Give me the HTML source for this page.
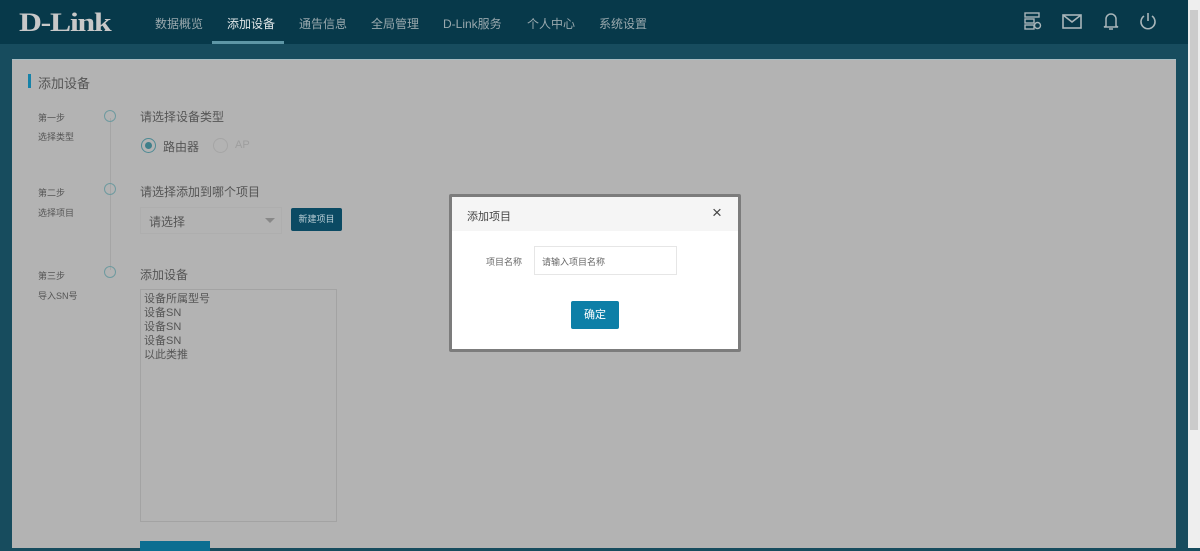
<!DOCTYPE html>
<html><head><meta charset="utf-8"><style>
*{margin:0;padding:0;box-sizing:border-box}
body{width:1200px;height:548px;overflow:hidden;background:#174c5e;font-family:"Liberation Sans","Noto Sans CJK SC",sans-serif;position:relative}
.hdr{position:absolute;left:0;top:0;width:1188px;height:44px;background:#07394a}
.logo{position:absolute;left:19px;top:8px;font-family:"Liberation Serif",serif;font-weight:bold;font-size:26px;color:#c8c8c8;letter-spacing:-1px;transform:scaleX(1.22);transform-origin:left}
.nav a{position:absolute;top:15px;font-size:12px;color:#9aa9ae;text-decoration:none}
.ul{position:absolute;left:212px;top:41px;width:72px;height:3px;background:#5e96a6}
.band{position:absolute;left:0;top:44px;width:1188px;height:504px;background:#174c5e}
.panel{position:absolute;left:12px;top:59px;width:1164px;height:489px;background:#b3b3b3;border-top:1px solid #a8bcc2}
.sb{position:absolute;left:1188px;top:0;width:12px;height:548px;background:#eeeeee}
.thumb{position:absolute;left:1190px;top:10px;width:8px;height:420px;background:#cbcbcb}
.t{position:absolute;color:#555;white-space:nowrap}
.circ{position:absolute;width:12px;height:12px;border:1px solid #6e9a9f;border-radius:50%}
.icon{position:absolute;top:12px}
</style></head><body>
<div class="hdr">
<div class="logo">D-Link</div>
<div class="nav">
<a style="left:155px">数据概览</a>
<a style="left:227px;color:#e0e6e8">添加设备</a>
<a style="left:299px">通告信息</a>
<a style="left:371px">全局管理</a>
<a style="left:443px">D-Link服务</a>
<a style="left:527px">个人中心</a>
<a style="left:599px">系统设置</a>
</div>
<div class="ul"></div>
<svg class="icon" style="left:1024px" width="18" height="19" viewBox="0 0 18 19" fill="none" stroke="#a9b6ba" stroke-width="1.4"><rect x="1" y="1" width="14" height="4"/><rect x="1" y="7" width="9" height="4"/><rect x="1" y="13" width="9" height="4"/><circle cx="13.5" cy="13.5" r="3"/></svg>
<svg class="icon" style="left:1062px;top:14px" width="20" height="15" viewBox="0 0 20 15" fill="none" stroke="#a9b6ba" stroke-width="1.6"><rect x="1" y="1" width="18" height="13"/><path d="M1 1l9 7 9-7"/></svg>
<svg class="icon" style="left:1103px" width="16" height="19" viewBox="0 0 16 19" fill="none" stroke="#a9b6ba" stroke-width="1.5"><path d="M3 14V7a5 5 0 0110 0v7l2 1H1z"/><path d="M6 17h4"/></svg>
<svg class="icon" style="left:1139px" width="18" height="19" viewBox="0 0 18 19" fill="none" stroke="#a9b6ba" stroke-width="1.6"><path d="M5 4a7 7 0 108 0"/><path d="M9 1v8"/></svg>
</div>
<div class="band"></div>
<div class="panel"></div>
<div style="position:absolute;left:28px;top:74px;width:3px;height:14px;background:#1682a8"></div>
<div class="t" style="left:38px;top:73px;font-size:13px">添加设备</div>
<div style="position:absolute;left:110px;top:118px;width:1px;height:152px;background:#a5a5a5"></div>
<div class="circ" style="left:104px;top:110px"></div>
<div class="circ" style="left:104px;top:183px"></div>
<div class="circ" style="left:104px;top:266px"></div>
<div class="t" style="left:38px;top:111px;font-size:9px">第一步</div>
<div class="t" style="left:38px;top:130px;font-size:9px">选择类型</div>
<div class="t" style="left:38px;top:186px;font-size:9px">第二步</div>
<div class="t" style="left:38px;top:206px;font-size:9px">选择项目</div>
<div class="t" style="left:38px;top:269px;font-size:9px">第三步</div>
<div class="t" style="left:38px;top:289px;font-size:9px">导入SN号</div>
<div class="t" style="left:140px;top:108px;font-size:12px">请选择设备类型</div>
<div style="position:absolute;left:141px;top:138px;width:15px;height:15px;border:1px solid #4e8a94;border-radius:50%"><div style="margin:3px;width:7px;height:7px;border-radius:50%;background:#3f7f8a"></div></div>
<div class="t" style="left:163px;top:138px;font-size:12px">路由器</div>
<div style="position:absolute;left:213px;top:138px;width:15px;height:15px;border:1px solid #a5a5a5;border-radius:50%"></div>
<div class="t" style="left:235px;top:139px;font-size:11px;color:#9e9e9e">AP</div>
<div class="t" style="left:140px;top:183px;font-size:12px">请选择添加到哪个项目</div>
<div style="position:absolute;left:140px;top:207px;width:142px;height:27px;border:1px solid #aeaeae;background:#b3b3b3"></div>
<div class="t" style="left:149px;top:213px;font-size:12px">请选择</div>
<div style="position:absolute;left:265px;top:218px;border-left:5px solid transparent;border-right:5px solid transparent;border-top:5px solid #888"></div>
<div style="position:absolute;left:291px;top:208px;width:51px;height:23px;background:#0b4a63;border-radius:2px;color:#bcd0d8;font-size:9px;text-align:center;line-height:23px">新建项目</div>
<div class="t" style="left:140px;top:266px;font-size:12px">添加设备</div>
<div style="position:absolute;left:140px;top:289px;width:197px;height:233px;border:1px solid #a3a3a3"></div>
<div class="t" style="left:144px;top:292px;font-size:11px;line-height:14px">设备所属型号<br>设备SN<br>设备SN<br>设备SN<br>以此类推</div>
<div style="position:absolute;left:140px;top:541px;width:70px;height:10px;background:#0b6e91"></div>
<div class="sb"></div><div class="thumb"></div>
<div style="position:absolute;left:449px;top:194px;width:292px;height:158px;border:3px solid #7c7c7c;background:#fff;border-radius:2px">
<div style="height:34px;background:#f5f5f5;position:relative">
<div class="t" style="left:15px;top:11px;font-size:11px;color:#444">添加项目</div>
<div class="t" style="left:260px;top:6px;font-size:17px;color:#444">×</div>
</div>
<div class="t" style="left:34px;top:58px;font-size:9px;color:#666">项目名称</div>
<div style="position:absolute;left:82px;top:49px;width:143px;height:29px;border:1px solid #e6e6e6"></div>
<div class="t" style="left:90px;top:58px;font-size:9px;color:#666">请输入项目名称</div>
<div style="position:absolute;left:119px;top:104px;width:48px;height:28px;background:#0d7fa7;border-radius:2px;color:#fff;font-size:11px;text-align:center;line-height:28px">确定</div>
</div>
</body></html>
